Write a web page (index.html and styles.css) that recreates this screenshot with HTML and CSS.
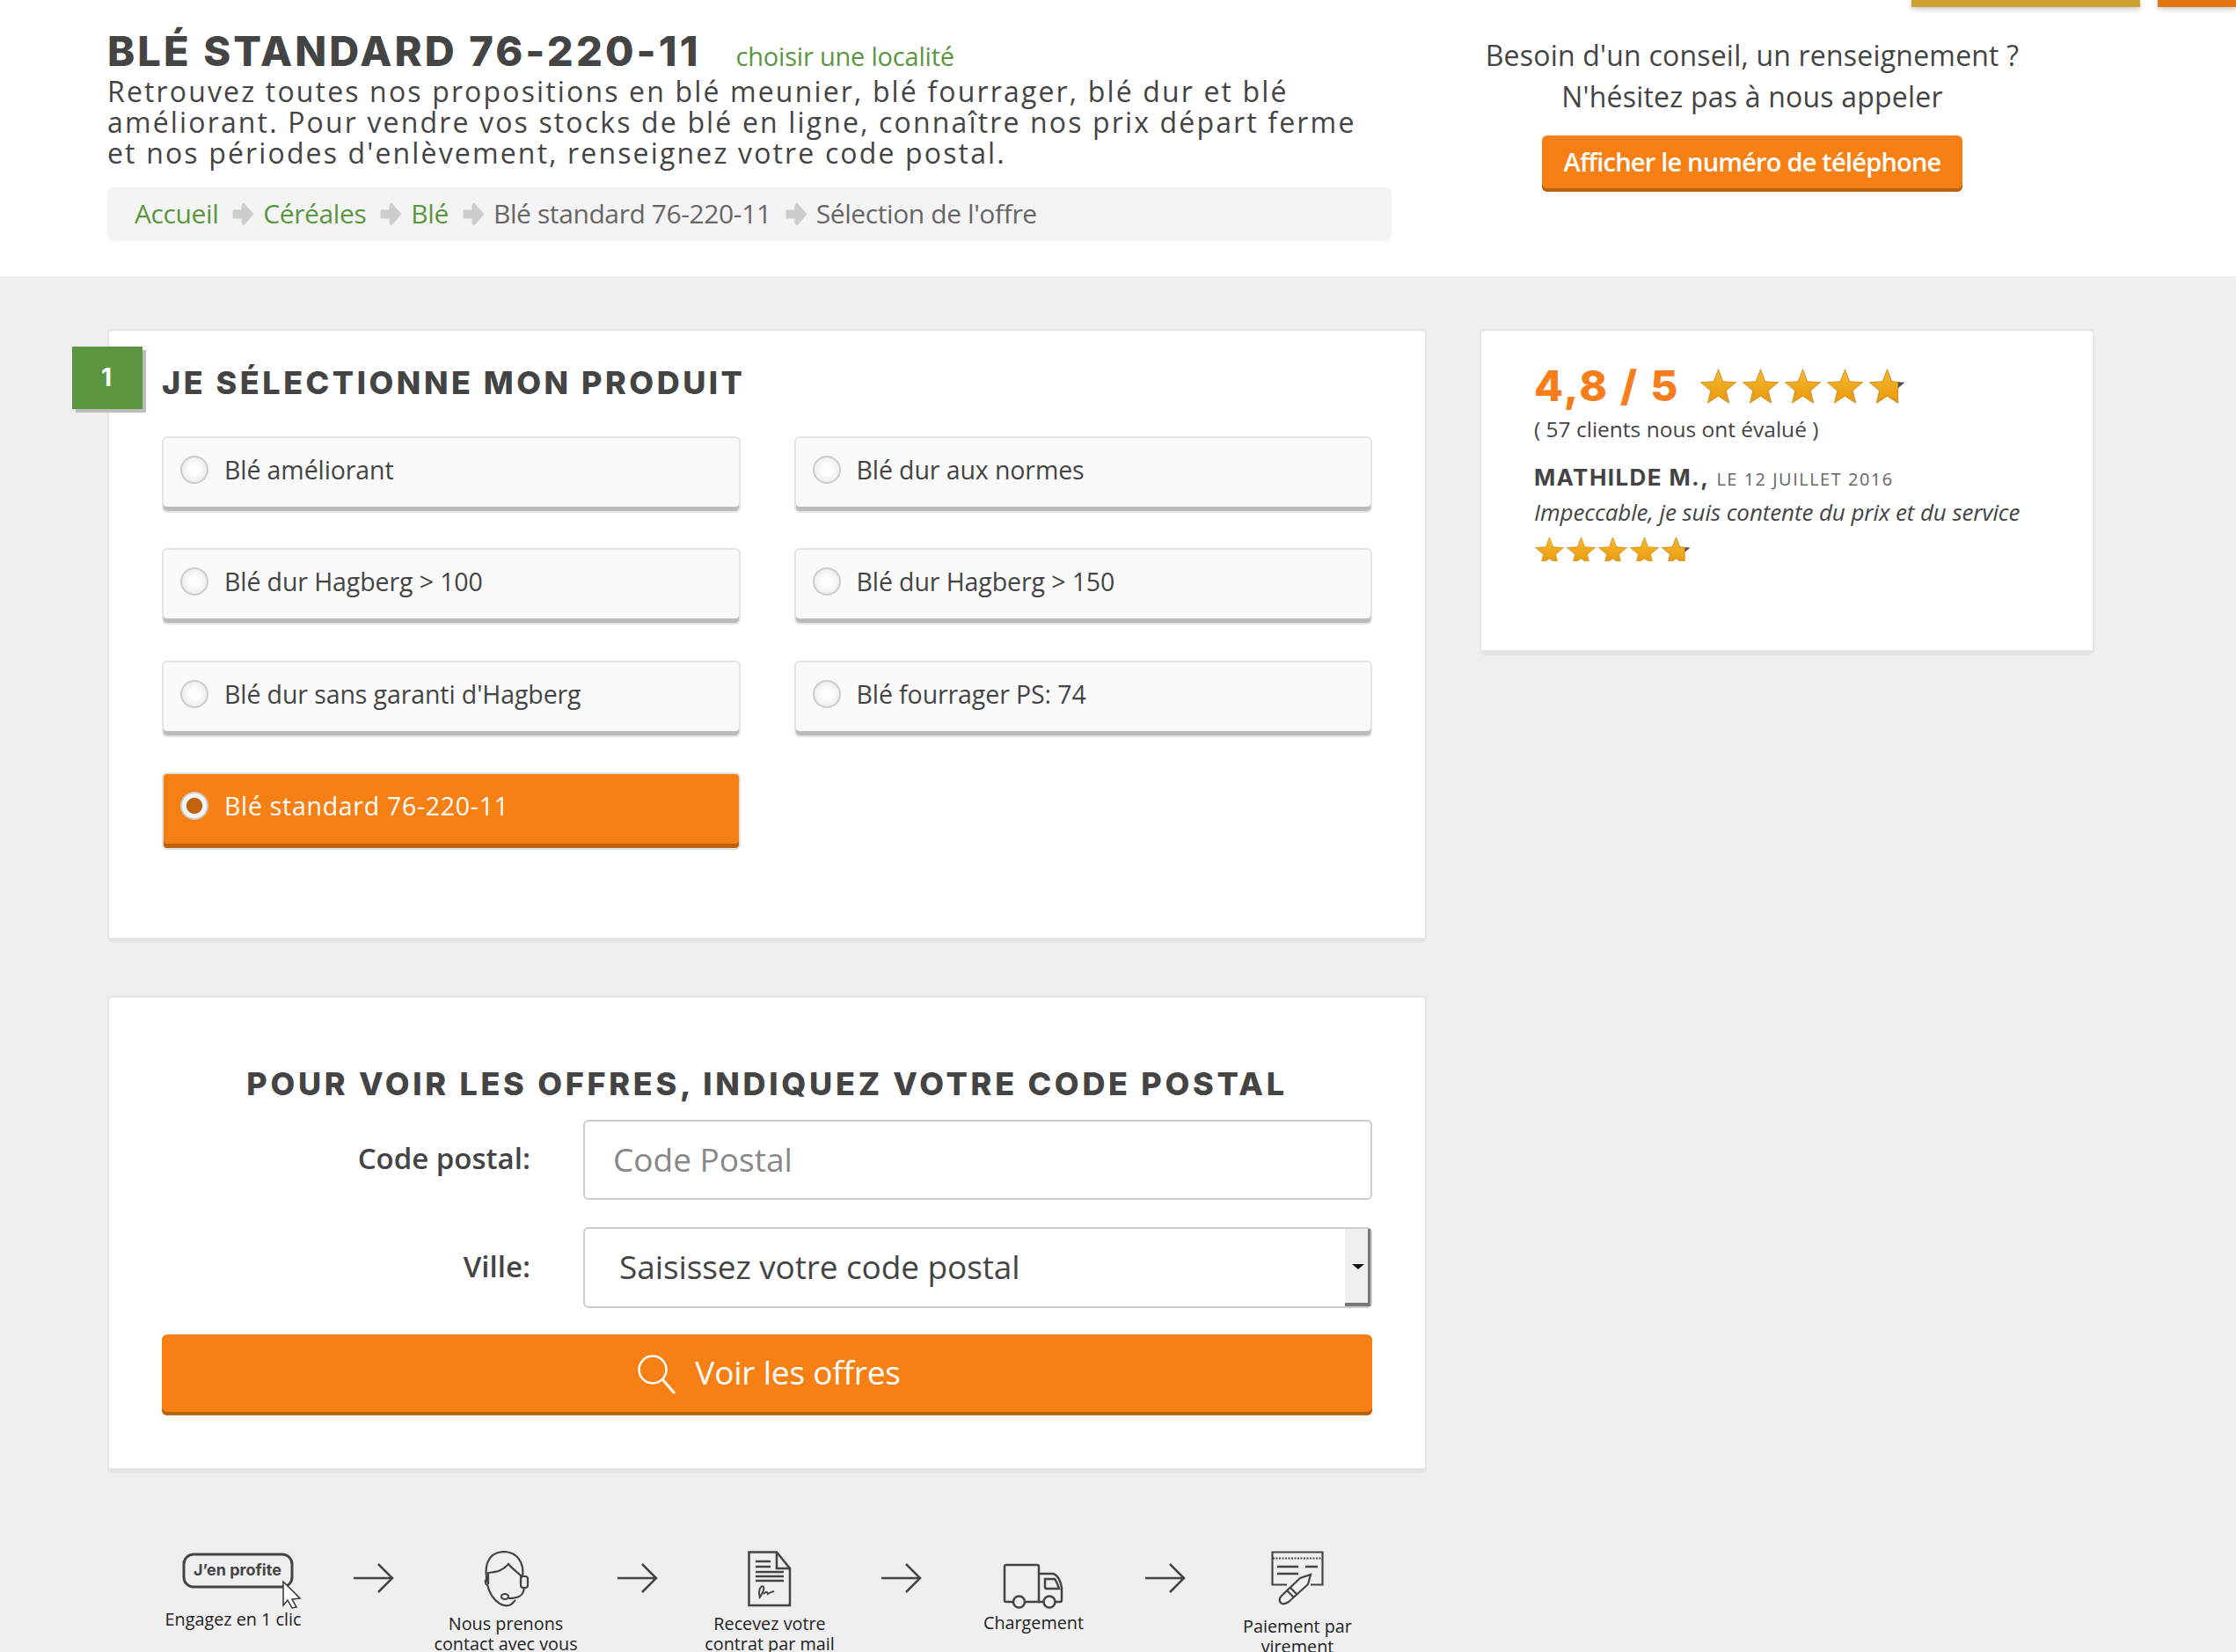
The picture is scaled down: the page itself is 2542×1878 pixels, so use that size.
FILE: index.html
```html
<!DOCTYPE html>
<html lang="fr">
<head>
  <meta charset="UTF-8">
  <title>Blé standard 76-220-11</title>
  <link rel="stylesheet" href="styles.css">
</head>
<body>
  <svg class="defs" width="0" height="0">
    <defs>
      <linearGradient id="star-fill" x1="0" y1="0" x2="0" y2="1">
        <stop offset="0" stop-color="#f9b92f"/>
        <stop offset="1" stop-color="#e8980b"/>
      </linearGradient>
      <symbol id="star" viewBox="0 0 48 46">
        <path d="M24 1 L30 17 L47 18 L34 29 L38 45 L24 36 L10 45 L14 29 L1 18 L18 17 Z" fill="#55504a"/>
        <path d="M24 1 L30 17 L38 17.500 L38 45 L24 36 L10 45 L14 29 L1 18 L18 17 Z" fill="url(#star-fill)" stroke="#c98a1c" stroke-width="1"/>
      </symbol>
      <symbol id="star-full" viewBox="0 0 48 46">
        <path d="M24 1 L30 17 L47 18 L34 29 L38 45 L24 36 L10 45 L14 29 L1 18 L18 17 Z" fill="url(#star-fill)" stroke="#c98a1c" stroke-width="1"/>
      </symbol>
      <symbol id="crumb-arrow" viewBox="0 0 25 27">
        <path d="M13 1 L24 13.500 L13 26 L11 24 L11 18 L1 18 L1 9 L11 9 L11 3 Z" fill="#cdcdcd" stroke="#cdcdcd" stroke-linejoin="round"/>
      </symbol>
      <symbol id="step-arrow" viewBox="0 0 46 34">
        <path d="M0 17 H44 M28 1 L44 17 L28 33" fill="none" stroke="#444" stroke-width="2.500"/>
      </symbol>
    </defs>
  </svg>

  <div class="top-tabs">
    <div class="tab tab-gold"></div>
    <div class="tab tab-orange"></div>
  </div>

  <header class="header">
    <div class="intro">
      <div class="title-row">
        <h1>BLÉ STANDARD 76-220-11</h1>
        <a class="locality">choisir une localité</a>
      </div>
      <p class="desc">Retrouvez toutes nos propositions en blé meunier, blé fourrager, blé dur et blé améliorant. Pour vendre vos stocks de blé en ligne, connaître nos prix départ ferme et nos périodes d'enlèvement, renseignez votre code postal.</p>
      <nav class="crumbs">
        <a>Accueil</a>
        <svg class="crumb-sep"><use href="#crumb-arrow"/></svg>
        <a>Céréales</a>
        <svg class="crumb-sep"><use href="#crumb-arrow"/></svg>
        <a>Blé</a>
        <svg class="crumb-sep"><use href="#crumb-arrow"/></svg>
        <span>Blé standard 76-220-11</span>
        <svg class="crumb-sep"><use href="#crumb-arrow"/></svg>
        <span>Sélection de l'offre</span>
      </nav>
    </div>
    <div class="advice">
      <p>Besoin d'un conseil, un renseignement ?</p>
      <p>N'hésitez pas à nous appeler</p>
      <button class="btn-phone">Afficher le numéro de téléphone</button>
    </div>
  </header>

  <main class="main">
    <div class="main-col">
      <section class="card card-product">
        <div class="step-badge">1</div>
        <h2 class="card-title">JE SÉLECTIONNE MON PRODUIT</h2>
        <div class="options">
          <div class="option"><span class="radio"></span>Blé améliorant</div>
          <div class="option"><span class="radio"></span>Blé dur aux normes</div>
          <div class="option"><span class="radio"></span>Blé dur Hagberg &gt; 100</div>
          <div class="option"><span class="radio"></span>Blé dur Hagberg &gt; 150</div>
          <div class="option"><span class="radio"></span>Blé dur sans garanti d'Hagberg</div>
          <div class="option"><span class="radio"></span>Blé fourrager PS: 74</div>
          <div class="option option-on"><span class="radio"></span>Blé standard 76-220-11</div>
        </div>
      </section>

      <section class="card card-postal">
        <h2 class="card-title postal-title">POUR VOIR LES OFFRES, INDIQUEZ VOTRE CODE POSTAL</h2>
        <div class="field">
          <label class="field-label" for="cp">Code postal:</label>
          <input class="input" id="cp" type="text" placeholder="Code Postal">
        </div>
        <div class="field">
          <span class="field-label">Ville:</span>
          <div class="select">
            <span class="select-text">Saisissez votre code postal</span>
            <span class="select-btn"></span>
          </div>
        </div>
        <button class="btn-offers">
          <svg class="search-icon" viewBox="0 0 44 46"><circle cx="17" cy="17" r="15.500" fill="none" stroke="#fff" stroke-width="2.500"/><path d="M28 28 L42 44" stroke="#fff" stroke-width="3"/></svg>
          Voir les offres
        </button>
      </section>

      <div class="steps">
        <div class="step step-first">
          <svg class="icon-click" viewBox="0 0 136 64">
            <rect x="2" y="2" width="123" height="37" rx="11" fill="none" stroke="#444" stroke-width="3"/>
            <text x="63" y="26" text-anchor="middle" class="click-text">J’en profite</text>
            <path d="M115 33 L134 52 L125 53 L130 62 L125 63 L120 54 L115 60 Z" fill="#fff" stroke="#333" stroke-width="1.500"/>
          </svg>
          <p>Engagez en 1 clic</p>
        </div>
        <svg class="arrow"><use href="#step-arrow"/></svg>
        <div class="step">
          <svg class="icon-tall" viewBox="0 0 54 64" width="54" height="64" fill="none" stroke="#444" stroke-width="2.200">
            <path d="M6 36 C2 18 6 2 24 1 C42 1 48 16 46 29"/>
            <path d="M7 38 V25 C18 24 24 22 30 15 C34 20 40 24 44 28 V37"/>
            <path d="M6 38 C8 48 14 56 20 60 C25 63 29 63 33 61 L38 56"/>
            <path d="M6 32 C3 33 3 37 6 39"/>
            <rect x="44" y="29" width="8" height="13" rx="3"/>
            <path d="M48 42 C47 51 42 54 30 54"/>
            <ellipse cx="26" cy="52" rx="4" ry="3"/>
          </svg>
          <p>Nous prenons<br>contact avec vous</p>
        </div>
        <svg class="arrow"><use href="#step-arrow"/></svg>
        <div class="step">
          <svg class="icon-tall" viewBox="0 0 50 64" width="50" height="64" fill="none" stroke="#444" stroke-width="2.500">
            <path d="M1.500 1.500 H33 L48 20 V62 H1.500 Z"/>
            <path d="M33 1.500 V20 H48"/>
            <path d="M9 12 H26 M9 18 H26 M9 24 H41 M9 29 H41 M9 34 H41"/>
            <path d="M14 53 C11 44 16 38 18 41 C20 45 14 52 13 54 M18 49 C21 46 22 46 23 49 C25 47 27 47 30 46" stroke-width="2"/>
          </svg>
          <p>Recevez votre<br>contrat par mail</p>
        </div>
        <svg class="arrow"><use href="#step-arrow"/></svg>
        <div class="step">
          <svg class="icon-truck" viewBox="0 0 70 52" width="70" height="52" fill="none" stroke="#444" stroke-width="2.500">
            <path d="M11 44 H4 Q2 44 2 42 V4 Q2 2 4 2 H39 Q41 2 41 4 V44 H26"/>
            <path d="M41 12 H57 C62 13 66 20 67 28 V42 Q67 44 65 44 H60 M46 44 H41"/>
            <path d="M48 18 H59 Q62 22 64 29 H50 Q48 29 48 27 Z"/>
            <circle cx="18.500" cy="44" r="6.500"/>
            <circle cx="53" cy="44" r="6.500"/>
          </svg>
          <p>Chargement</p>
        </div>
        <svg class="arrow"><use href="#step-arrow"/></svg>
        <div class="step">
          <svg class="icon-cheque" viewBox="0 0 60 63" width="60" height="63" fill="none" stroke="#444" stroke-width="2.200">
            <path d="M18 38.500 H1.500 V1.500 H58.500 V38.500 H45"/>
            <path d="M2 8.500 H58" stroke-dasharray="2 1.500"/>
            <path d="M7 18 H31 M7 26 H31 M39 18 H53" stroke-width="2.500"/>
            <path d="M45 27 L42 38 L20 58 Q14 62 11 59 Q8 55 12 51 L33 31 Z"/>
            <path d="M18 45 L26 53 M22 42 L30 50"/>
          </svg>
          <p>Paiement par<br>virement</p>
        </div>
      </div>
    </div>

    <aside class="card card-rating">
      <div class="score-row">
        <span class="score">4,8 / 5</span>
        <span class="stars">
          <svg class="star"><use href="#star-full"/></svg>
          <svg class="star"><use href="#star-full"/></svg>
          <svg class="star"><use href="#star-full"/></svg>
          <svg class="star"><use href="#star-full"/></svg>
          <svg class="star"><use href="#star"/></svg>
        </span>
      </div>
      <p class="score-count">( 57 clients nous ont évalué )</p>
      <p class="review-head"><strong>MATHILDE M.,</strong> <span>LE 12 JUILLET 2016</span></p>
      <p class="review-text">Impeccable, je suis contente du prix et du service</p>
      <div class="stars-small">
        <svg class="star-s"><use href="#star-full"/></svg>
        <svg class="star-s"><use href="#star-full"/></svg>
        <svg class="star-s"><use href="#star-full"/></svg>
        <svg class="star-s"><use href="#star-full"/></svg>
        <svg class="star-s"><use href="#star"/></svg>
      </div>
    </aside>
  </main>
</body>
</html>
```

FILE: styles.css
```css
html, body {
  margin: 0;
  height: 100%;
  overflow: hidden;
}
body {
  background-color: #efefef;
  color: #444444;
  font-family: "Open Sans", "Noto Sans", sans-serif;
}
p, h1, h2 {
  margin: 0;
}
.defs {
  display: block;
  height: 0;
}

/* top tabs */
.top-tabs {
  display: flex;
  justify-content: flex-end;
  gap: 20px;
  height: 8px;
  background: #ffffff;
}
.tab {
  height: 8px;
  box-shadow: 0 2px 6px rgba(0, 0, 0, 0.25);
}
.tab-gold {
  width: 260px;
  background: #cfa32f;
}
.tab-orange {
  width: 89px;
  background: #e0760f;
}

/* header */
.header {
  display: flex;
  height: 306px;
  box-sizing: border-box;
  padding: 27px 0 0 122px;
  background: #ffffff;
}
.intro {
  width: 1460px;
}
.title-row {
  display: flex;
  align-items: baseline;
  gap: 40px;
  height: 46px;
}
h1 {
  font-family: Inter, sans-serif;
  font-size: 47px;
  line-height: 46px;
  font-weight: 800;
  letter-spacing: 3.1px;
  white-space: nowrap;
}
.locality {
  color: #5a963f;
  font-size: 29px;
  letter-spacing: -0.2px;
}
.desc {
  margin-top: 5px;
  width: 1440px;
  font-size: 32px;
  line-height: 35px;
  letter-spacing: 2.15px;
}
.crumbs {
  display: flex;
  align-items: center;
  height: 61px;
  margin-top: 22px;
  padding: 0 0 3px 31px;
  box-sizing: border-box;
  background: #f4f4f4;
  border-radius: 8px;
  font-size: 30px;
  letter-spacing: -0.4px;
  color: #666666;
}
.crumbs a {
  color: #5a963f;
}
.crumb-sep {
  width: 25px;
  height: 27px;
  margin: 3px 10px 0 16px;
}
.advice {
  width: 684px;
  margin-left: 68px;
  padding-top: 4px;
  text-align: center;
  font-size: 32px;
  line-height: 47px;
  letter-spacing: 0.2px;
}
.btn-phone {
  width: 478px;
  height: 64px;
  margin-top: 21px;
  padding: 0 0 6px;
  border: none;
  border-radius: 6px;
  background: #f78015;
  box-shadow: inset 0 -4px 0 #b9620f;
  color: #ffffff;
  font-family: inherit;
  font-size: 29px;
  font-weight: 600;
  letter-spacing: -0.8px;
}

/* layout */
.main {
  display: flex;
  align-items: flex-start;
  gap: 60px;
  padding: 60px 0 0 122px;
}
.main-col {
  width: 1500px;
}
.card {
  position: relative;
  box-sizing: border-box;
  background: #ffffff;
  border: 2px solid #e5e5e5;
  border-bottom-width: 6px;
  border-radius: 6px;
}
.card-title {
  font-family: Inter, sans-serif;
  font-size: 36px;
  line-height: 44px;
  font-weight: 800;
  letter-spacing: 3.5px;
}

/* product card */
.card-product {
  height: 698px;
  padding: 37px 60px 0;
}
.step-badge {
  position: absolute;
  left: -42px;
  top: 18px;
  width: 80px;
  height: 71px;
  padding-right: 2px;
  box-sizing: border-box;
  background: #5a963f;
  box-shadow: 4px 4px 0 #bdbdbd;
  color: #ffffff;
  font-family: Inter, sans-serif;
  font-size: 28px;
  font-weight: 700;
  line-height: 70px;
  text-align: center;
}
.options {
  display: grid;
  grid-template-columns: 1fr 1fr;
  grid-auto-rows: 87px;
  column-gap: 61px;
  row-gap: 40.300px;
  margin-top: 39px;
}
.option {
  display: flex;
  align-items: center;
  gap: 18px;
  padding: 0 0 11px 19px;
  box-sizing: border-box;
  background: #fafafa;
  border: 2px solid #e5e5e5;
  border-radius: 6px;
  box-shadow: inset 0 -5px 0 #bcbcbc;
  font-size: 28.500px;
  letter-spacing: -0.1px;
}
.radio {
  width: 32px;
  height: 32px;
  box-sizing: border-box;
  border: 2px solid #cccccc;
  border-radius: 50%;
  background: radial-gradient(circle closest-side, #fdfdfd 40%, #eeeeee 100%);
}
.option-on {
  height: 88px;
  background: #f78015;
  border-color: #e7e0d8;
  box-shadow: inset 0 -5px 0 #b9620f;
  color: #ffffff;
  letter-spacing: 0.7px;
}
.option-on .radio {
  background: radial-gradient(circle closest-side, #c1630f 62%, #f5f5f5 68%);
}

/* postal card */
.card-postal {
  height: 543px;
  margin-top: 60px;
  padding: 76px 60px 0;
}
.postal-title {
  margin-bottom: 19px;
  text-align: center;
  letter-spacing: 3.7px;
  white-space: nowrap;
}
.field {
  display: flex;
  align-items: center;
  gap: 60px;
  margin-bottom: 31px;
}
.field-label {
  width: 419px;
  padding-bottom: 4px;
  text-align: right;
  font-size: 33px;
  font-weight: 600;
}
.input {
  flex: 1;
  min-width: 0;
  height: 91px;
  box-sizing: border-box;
  padding: 0 32px 3px;
  background: #ffffff;
  border: 2px solid #cccccc;
  border-radius: 6px;
  color: #444444;
  font-family: inherit;
  font-size: 37px;
}
.input::placeholder {
  color: #888888;
  opacity: 1;
}
.select {
  flex: 1;
  display: flex;
  justify-content: space-between;
  height: 92px;
  box-sizing: border-box;
  padding-left: 39px;
  background: #ffffff;
  border: 2px solid #cccccc;
  border-radius: 6px;
}
.select-text {
  font-size: 37px;
  line-height: 86px;
  letter-spacing: -0.1px;
}
.select-btn {
  position: relative;
  width: 26px;
  height: 84px;
  background: #efefef;
  border-right: 3px solid #777777;
  border-bottom: 4px solid #777777;
}
.select-btn::after {
  content: "";
  position: absolute;
  left: 8px;
  top: 40px;
  border-style: solid;
  border-width: 6px 7px 0;
  border-color: #111111 transparent transparent;
}
.btn-offers {
  display: flex;
  align-items: center;
  justify-content: center;
  gap: 21px;
  width: 100%;
  height: 92px;
  margin-top: -1px;
  padding: 0 0 8px 5px;
  border: none;
  border-radius: 6px;
  background: #f78015;
  box-shadow: inset 0 -4px 0 #b9620f;
  color: #ffffff;
  font-family: inherit;
  font-size: 37px;
  letter-spacing: -0.2px;
}
.search-icon {
  width: 44px;
  height: 46px;
  margin-top: 8px;
}

/* steps */
.steps {
  display: flex;
  align-items: flex-start;
  padding: 88px 0 0 58px;
}
.step {
  flex: 0 0 150px;
  min-width: 0;
  display: flex;
  flex-direction: column;
  align-items: center;
  text-align: center;
}
.step-first {
  flex-basis: 170px;
}
.step p {
  font-size: 19.800px;
  line-height: 23px;
  white-space: nowrap;
  color: #222222;
}
.arrow {
  flex: 0 0 46px;
  width: 46px;
  height: 34px;
  margin: 14px 52px 0;
}
.icon-click {
  width: 136px;
  height: 64px;
  margin: 2px 0 0 19px;
}
.step-first p {
  margin-top: 0;
}
.icon-tall {
  margin-bottom: 7px;
}
.icon-truck {
  margin: 14px 0 4px;
}
.icon-cheque {
  margin: 0 0 11px;
}
.click-text {
  font-family: Inter, sans-serif;
  font-size: 18px;
  font-weight: 700;
  fill: #444444;
}

/* rating card */
.card-rating {
  width: 699px;
  height: 371px;
  padding: 38px 0 0 60px;
}
.score-row {
  display: flex;
  align-items: center;
  gap: 20px;
  height: 50px;
}
.score {
  color: #f97d1b;
  font-family: Inter, sans-serif;
  font-size: 48px;
  font-weight: 800;
  line-height: 50px;
  letter-spacing: 2.2px;
}
.stars {
  display: flex;
  gap: 1px;
}
.star {
  width: 47px;
  height: 40px;
}
.score-count {
  margin-top: 9px;
  font-size: 24.500px;
  line-height: 30px;
}
.review-head {
  margin-top: 24px;
  line-height: 32px;
  white-space: nowrap;
}
.review-head strong {
  font-family: Inter, sans-serif;
  font-size: 26px;
  font-weight: 700;
  letter-spacing: 1.4px;
}
.review-head span {
  font-size: 20px;
  letter-spacing: 1.5px;
  color: #666666;
  margin-left: 4px;
}
.review-text {
  margin-top: 4px;
  font-size: 26px;
  line-height: 32px;
  font-style: italic;
  letter-spacing: -0.1px;
}
.stars-small {
  display: flex;
  gap: 1px;
  height: 28px;
  margin-top: 12px;
  overflow: hidden;
}
.star-s {
  width: 35px;
  height: 32px;
}
```
